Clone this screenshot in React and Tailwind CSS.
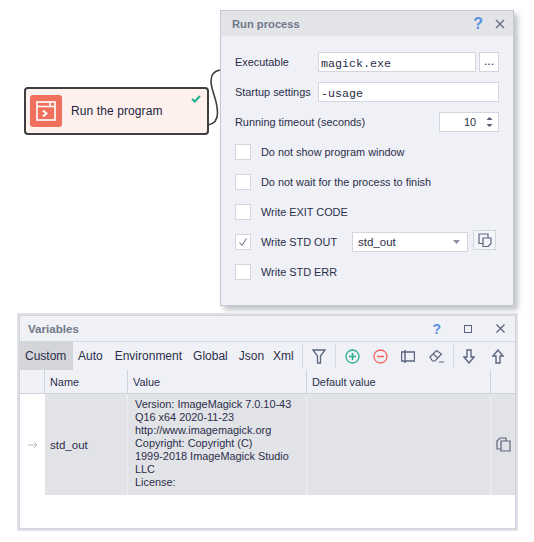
import React from "react";

const CopyButtonIcon = () => (
  <svg width="14" height="14" viewBox="0 0 14 14" fill="#f4f5f9" stroke="#5c6580" strokeWidth="1.2">
    <path d="M1 10.5V1H10V10.5H1Z" />
    <path d="M5 5H13V10.5L10 13.5H5V5Z" />
  </svg>
);

const CopyRowIcon = () => (
  <svg width="15" height="15" viewBox="0 0 15 15" fill="#e2e3e7" stroke="#5c6580" strokeWidth="1.2">
    <path d="M1 12V4L4 1H10V12H1Z" />
    <path d="M5 4H14V14H5V4Z" />
  </svg>
);

const Checkbox = ({ label, checked }) => (
  <div className="flex items-center h-[16px]">
    <div className="w-[16px] h-[16px] bg-white border border-[#d3d6df] flex items-center justify-center">
      {checked && (
        <svg width="10" height="10" viewBox="0 0 10 10" fill="none" stroke="#555c70" strokeWidth="1">
          <path d="M1.5 5.5L4 8.5L8.5 1.5" />
        </svg>
      )}
    </div>
    <span className="ml-[10px] whitespace-nowrap">{label}</span>
  </div>
);

const Separator = () => <div className="w-px h-[24px] bg-[#d5d8e0]" />;

const App = () => {
  return (
    <div className="w-[534px] h-[542px] bg-white overflow-hidden text-[10.9px] leading-[14px] text-[#2b2e4a] font-['Liberation_Sans',sans-serif]">
      {/* Top part with node and dialog */}
      <div className="flex items-start pt-[10px] pl-[24px]">
        <div className="relative mt-[77px] w-[185px] h-[48px] rounded-[4px] border-2 border-[#3f3f41] bg-[#fef1ed] flex items-center pl-[4px] shrink-0">
          <div className="w-[32px] h-[32px] rounded-[3px] bg-[#ef705c] flex items-center justify-center">
            <svg width="20" height="20" viewBox="0 0 20 20" fill="none" stroke="#ffffff" strokeWidth="1.6">
              <rect x="1" y="1" width="18" height="18" />
              <path d="M1 5.5H19M14 5.5V1" />
              <path d="M7 9.5L10.5 12.5L7 15.5" strokeWidth="2" />
            </svg>
          </div>
          <span className="ml-[9px] text-[12px] tracking-[0.1px] text-[#22243f]">Run the program</span>
          <svg width="10" height="8" viewBox="0 0 10 8" fill="none" stroke="#27b08c" strokeWidth="2.2" className="absolute top-[6px] right-[6px]">
            <path d="M1 4L3.8 6.5L9 1" />
          </svg>
          <svg width="16" height="62" viewBox="0 0 16 62" fill="none" stroke="#3f3f41" strokeWidth="1.6" className="absolute left-[181px] top-[-20px]">
            <path d="M13 1C7 2 4 6 4 12C4 22 10.5 30 10.5 44C10.5 52 7 55 1 56" />
          </svg>
        </div>

        <div className="ml-[11px] w-[294px] h-[296px] border border-[#c5c8d2] bg-[#f0f1f6] shadow-[4px_4px_5px_rgba(120,125,135,0.45)] shrink-0 relative z-10">
          <div className="h-[25px] bg-[#e3e4e8] flex items-center pl-[11px] pr-[8px]">
            <span className="font-bold text-[11.2px] text-[#6f7888]">Run process</span>
            <span className="ml-auto text-[16px] font-bold text-[#5b90e0]">?</span>
            <svg width="10" height="10" viewBox="0 0 10 10" fill="none" stroke="#6b7280" strokeWidth="1.5" className="ml-[12px]">
              <path d="M1 1L9 9M9 1L1 9" />
            </svg>
          </div>

          <div className="pl-[14px] pr-[14px] pt-[16px] flex flex-col">
            <div className="flex items-center h-[20px]">
              <span className="w-[83px] whitespace-nowrap">Executable</span>
              <div className="w-[158px] h-[20px] bg-white border border-[#d3d6df] flex items-center pl-[2px] pt-[3px] font-['Liberation_Mono',monospace] text-[11.7px]">magick.exe</div>
              <div className="ml-[3px] w-[20px] h-[20px] bg-white border border-[#d3d6df] flex items-center justify-center text-[12px] pb-[2px]">...</div>
            </div>
            <div className="flex items-center h-[20px] mt-[10px]">
              <span className="w-[83px] whitespace-nowrap">Startup settings</span>
              <div className="w-[181px] h-[20px] bg-white border border-[#d3d6df] flex items-center pl-[2px] pt-[3px] font-['Liberation_Mono',monospace] text-[11.7px]">-usage</div>
            </div>
            <div className="flex items-center h-[20px] mt-[10px]">
              <span className="whitespace-nowrap">Running timeout (seconds)</span>
              <div className="ml-auto w-[60px] h-[20px] bg-white border border-[#d3d6df] flex items-center justify-end pr-[5px]">
                <span>10</span>
                <svg width="7" height="14" viewBox="0 0 7 14" fill="#555c70" className="ml-[10px]">
                  <path d="M3.5 2L6.5 5H0.5Z" />
                  <path d="M3.5 12L6.5 9H0.5Z" />
                </svg>
              </div>
            </div>

            <div className="flex flex-col gap-[14px] mt-[12px]">
              <Checkbox label="Do not show program window" />
              <Checkbox label="Do not wait for the process to finish" />
              <Checkbox label="Write EXIT CODE" />
              <div className="flex items-center h-[16px]">
                <div className="w-[117px]">
                  <Checkbox label="Write STD OUT" checked />
                </div>
                <div className="w-[116px] h-[20px] bg-white border border-[#d3d6df] flex items-center pl-[5px] pr-[7px] text-[11.5px]">
                  <span>std_out</span>
                  <svg width="7" height="4" viewBox="0 0 7 4" fill="#8a90a0" className="ml-auto">
                    <path d="M0 0H7L3.5 4Z" />
                  </svg>
                </div>
                <div className="ml-[5px] mb-[5px] w-[23px] h-[20px] bg-[#f4f5f9] border border-[#d3d6df] flex items-center justify-center">
                  <CopyButtonIcon />
                </div>
              </div>
              <Checkbox label="Write STD ERR" />
            </div>
          </div>
        </div>
      </div>

      {/* Variables panel */}
      <div className="mt-[7px] ml-[17px] w-[501px] h-[218px] border-2 border-[#dfe1e7] bg-white relative z-20">
        <div className="h-full border border-[#d0d3dc] flex flex-col">
          <div className="h-[26px] bg-[#f0f1f6] border-b border-[#d5d8e0] flex items-center pl-[8px] pr-[10px]">
            <span className="font-bold text-[11.6px] text-[#6f7888]">Variables</span>
            <span className="ml-auto text-[14px] font-bold text-[#5b90e0]">?</span>
            <div className="ml-[23px] w-[8px] h-[8px] border border-[#5c6580]" />
            <svg width="9" height="9" viewBox="0 0 9 9" fill="none" stroke="#5c6580" strokeWidth="1.3" className="ml-[24px]">
              <path d="M0.5 0.5L8.5 8.5M8.5 0.5L0.5 8.5" />
            </svg>
          </div>

          <div className="h-[28px] bg-[#f0f1f6] flex items-center text-[12px]">
            <div className="h-full px-[5px] w-[53px] bg-[#d3d5d9] flex items-center whitespace-nowrap">Custom</div>
            <span className="ml-[5px]">Auto</span>
            <span className="ml-[12px]">Environment</span>
            <span className="ml-[11px]">Global</span>
            <span className="ml-[11px]">Json</span>
            <span className="ml-[9px]">Xml</span>
            <div className="ml-[8px]"><Separator /></div>
            <svg width="14" height="15" viewBox="0 0 14 15" fill="none" stroke="#5c6580" strokeWidth="1.3" className="ml-[9px]">
              <path d="M1 1H13L8.5 7V14H5.5V7L1 1Z" />
            </svg>
            <div className="ml-[9px]"><Separator /></div>
            <svg width="15" height="15" viewBox="0 0 15 15" fill="none" stroke="#27b08c" strokeWidth="1.3" className="ml-[9px]">
              <circle cx="7.5" cy="7.5" r="6.5" />
              <path d="M4 7.5H11M7.5 4V11" strokeWidth="1.6" />
            </svg>
            <svg width="15" height="15" viewBox="0 0 15 15" fill="none" stroke="#f0625e" strokeWidth="1.3" className="ml-[13px]">
              <circle cx="7.5" cy="7.5" r="6.5" />
              <path d="M4 7.5H11" strokeWidth="1.6" />
            </svg>
            <svg width="14" height="14" viewBox="0 0 14 14" fill="none" stroke="#5c6580" strokeWidth="1.4" className="ml-[13px]">
              <path d="M0.5 3H13.5V12H0.5V3ZM4 1V14" />
            </svg>
            <svg width="15" height="14" viewBox="0 0 15 14" fill="none" stroke="#5c6580" strokeWidth="1.2" className="ml-[14px]">
              <path d="M1 8L7.5 1.5L12.5 5L6 12H3.5L1 8Z" />
              <path d="M4 5L9 9M10 13H15" />
            </svg>
            <div className="ml-[9px]"><Separator /></div>
            <svg width="12" height="15" viewBox="0 0 12 15" fill="none" stroke="#5c6580" strokeWidth="1.4" className="ml-[9px]">
              <path d="M4 1H8V8H11L6 14L1 8H4V1Z" />
            </svg>
            <svg width="12" height="15" viewBox="0 0 12 15" fill="none" stroke="#5c6580" strokeWidth="1.4" className="ml-[17px]">
              <path d="M4 14H8V7H11L6 1L1 7H4V14Z" />
            </svg>
          </div>

          <div className="grid grid-cols-[25px_83px_179px_184px_1fr] h-[24px] bg-[#f0f1f6] border-b border-[#d0d3dc] items-stretch">
            <div className="border-r border-[#d0d3dc]" />
            <div className="border-r border-[#d0d3dc] flex items-center pl-[5px]">Name</div>
            <div className="border-r border-[#d0d3dc] flex items-center pl-[5px]">Value</div>
            <div className="border-r border-[#d0d3dc] flex items-center pl-[5px]">Default value</div>
            <div />
          </div>

          <div className="grid grid-cols-[25px_83px_179px_184px_1fr] h-[101px] items-stretch">
            <div className="bg-white flex items-center justify-center">
              <svg width="10" height="8" viewBox="0 0 10 8" fill="none" stroke="#b9bcc6" strokeWidth="1">
                <path d="M0 4H9M6 1L9 4L6 7" />
              </svg>
            </div>
            <div className="bg-[#e2e3e7] border-r border-[#eceef2] flex items-center pl-[5px] text-[11.5px]">std_out</div>
            <div className="bg-[#e2e3e7] border-r border-[#eceef2] flex items-center pl-[7px] pb-[3px] leading-[13px] whitespace-nowrap">
              <div>
                Version: ImageMagick 7.0.10-43<br />
                Q16 x64 2020-11-23<br />
                http://www.imagemagick.org<br />
                Copyright: Copyright (C)<br />
                1999-2018 ImageMagick Studio<br />
                LLC<br />
                License:
              </div>
            </div>
            <div className="bg-[#e2e3e7] border-r border-[#eceef2]" />
            <div className="bg-[#e2e3e7] flex items-center justify-center">
              <CopyRowIcon />
            </div>
          </div>
        </div>
      </div>
    </div>
  );
};

export default App;
